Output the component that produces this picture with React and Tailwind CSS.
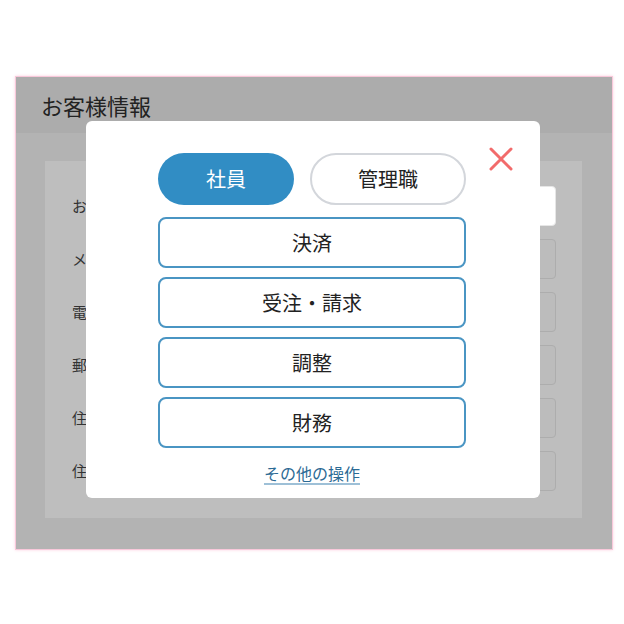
const FIELDS = ['お名前', 'メールアドレス', '電話番号', '郵便番号', '住所1', '住所2']

const MENU = ['決済', '受注・請求', '調整', '財務']

export default function App() {
  return (
    <div className="w-[624px] h-[624px] bg-white pt-[76px] pl-[15px] font-['Noto_Sans_CJK_JP','Noto_Sans',sans-serif]">
      <div className="relative w-[598px] h-[474px] border border-[#f8c8da] shadow-[0_0_3px_#fbd3e2] bg-[#b3b3b3] flex flex-col">
        <div className="h-[56px] shrink-0 bg-[#acacac] flex items-center pl-[25px] text-[22px] text-[#222]">
          お客様情報
        </div>
        <div className="pt-[28px] pl-[29px]">
          <div className="w-[537px] h-[357px] bg-[#bebebe] pt-[25px] pl-[27px] pr-[26px] flex flex-col gap-[13px]">
            {FIELDS.map((f, i) => (
              <div key={f} className="flex items-center justify-between h-[40px]">
                <span className="text-[15px] text-[#333]">{f}</span>
                <div
                  className={`w-[330px] h-[40px] rounded-[4px] border ${
                    i === 0 ? 'bg-white border-[#e6e6e6] relative z-10' : 'bg-[#bcbcbc] border-[#adadad]'
                  }`}
                />
              </div>
            ))}
          </div>
        </div>

        <div className="absolute z-20 left-[70px] top-[44px] w-[454px] h-[377px] bg-white rounded-[6px] pt-[32px] pl-[72px] flex flex-col">
          <button className="absolute right-[26px] top-[25px] w-[26px] h-[26px] flex items-center justify-center">
            <svg width="24" height="24" viewBox="0 0 24 24">
              <path d="M2 2L22 22M22 2L2 22" stroke="#f26b6b" strokeWidth="3" strokeLinecap="round" />
            </svg>
          </button>

          <div className="flex gap-[16px] w-[308px]">
            <button className="w-[136px] h-[52px] rounded-full bg-[#318dc4] text-white text-[20px]">社員</button>
            <button className="w-[156px] h-[52px] rounded-full bg-white border-2 border-[#d3d6db] text-[#222] text-[20px]">
              管理職
            </button>
          </div>

          <div className="mt-[12px] flex flex-col gap-[9px] w-[308px]">
            {MENU.map((m) => (
              <button
                key={m}
                className="h-[51px] rounded-[8px] border-2 border-[#4a95c3] bg-white text-[20px] text-[#222]"
              >
                {m}
              </button>
            ))}
          </div>

          <div className="w-[308px] flex justify-center mt-[13px]">
            <a className="text-[16px] text-[#2b6a94] underline decoration-[#9ec0d7] decoration-2 underline-offset-[3px]">
              その他の操作
            </a>
          </div>
        </div>
      </div>
    </div>
  )
}
